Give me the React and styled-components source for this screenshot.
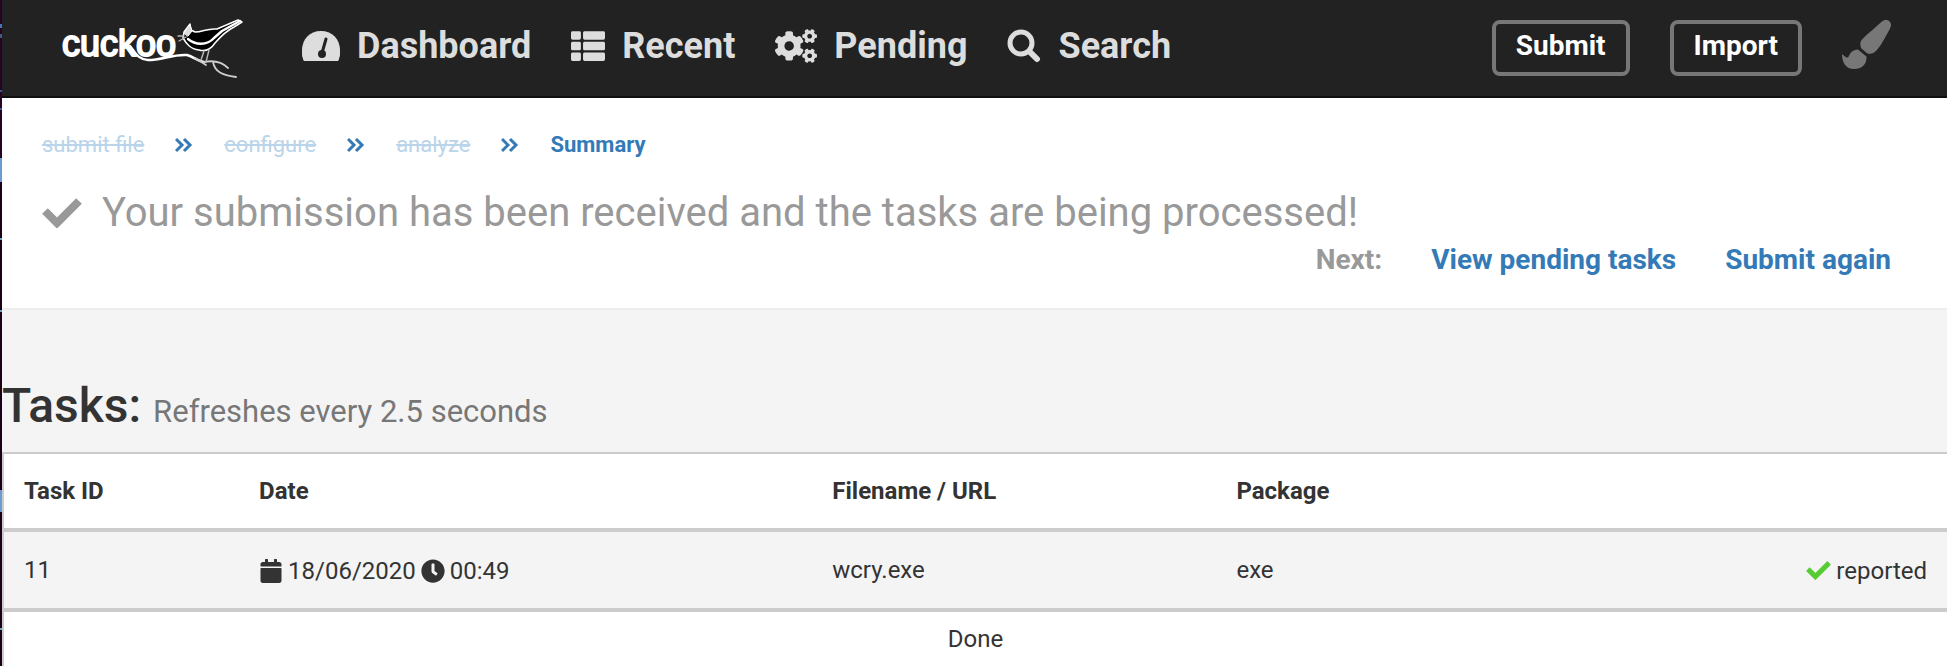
import React from "react";
import styled, { createGlobalStyle } from "styled-components";
import { FaThList, FaCogs, FaPaintBrush, FaCalendar, FaClock } from "react-icons/fa";

const GlobalStyle = createGlobalStyle`
  * { box-sizing: border-box; }
  body {
    margin: 0;
    background: #f4f4f4;
    color: #333;
    font: 400 24px/34px Roboto, "Liberation Sans", sans-serif;
  }
  html, body, #root { min-height: 100vh; }
  #root { display: flex; }
  a { text-decoration: none; }
`;

const Page = styled.div`
  display: flex;
  flex-direction: column;
  flex: 1;
  min-width: 0;
`;

const WindowEdge = styled.div`
  width: 2px;
  flex: none;
  background: linear-gradient(
    #240420 24px, #4872b4 24px 28px, #240420 28px 34px, #4a5584 34px 38px,
    #240420 38px 90px, #3a5ca0 90px 92px, #240420 92px 108px, #3a5ca0 108px 110px,
    #240420 110px 158px, #6b9bd0 158px 182px, #1c0018 182px 238px, #6fa3bd 238px 240px,
    #1c0018 240px 310px, #6fa3bd 310px 312px, #1c0018 312px 490px, #6b9bd0 490px 512px,
    #1c0018 512px 628px, #6fa3bd 628px 630px, #1c0018 630px
  );
`;

const Navbar = styled.nav`
  display: flex;
  align-items: center;
  justify-content: space-between;
  height: 98px;
  padding: 0 56px 0 58px;
  background: #222;
  border-bottom: 2px solid #101010;
`;

const NavGroup = styled.div`
  display: flex;
  align-items: center;
  gap: 40px;
`;

const Brand = styled.a`
  display: flex;
  margin-right: 18px;
  svg { display: block; }
`;

const NavLink = styled.a`
  display: flex;
  align-items: center;
  gap: 17px;
  padding-bottom: 4px;
  font-size: 36px;
  line-height: 48px;
  font-weight: 700;
  color: #ddd;
`;

const NavButton = styled.button`
  height: 56px;
  padding: 0 20px 4px;
  background: transparent;
  border: 4px solid #777;
  border-radius: 8px;
  color: #fff;
  font: 700 28px/36px Roboto, "Liberation Sans", sans-serif;
`;

const ThemeButton = styled.button`
  display: flex;
  padding: 0 0 8px;
  border: 0;
  background: transparent;
  color: #777;
`;

const Header = styled.header`
  padding: 29px 56px 27px 40px;
  background: #fff;
  border-bottom: 2px solid #eee;
`;

const Steps = styled.ol`
  display: flex;
  align-items: center;
  gap: 31px;
  margin: 0;
  padding: 0;
  list-style: none;
  font-size: 22px;
  line-height: 36px;
  color: #337ab7;
`;

const Step = styled.li`
  font-weight: ${(p) => (p.$current ? 700 : 400)};
  color: ${(p) => (p.$current ? "#337ab7" : "#bad4ea")};
  text-decoration: ${(p) => (p.$current ? "none" : "line-through")};
`;

const Divider = styled.li`
  display: flex;
`;

const Message = styled.h1`
  display: flex;
  align-items: center;
  gap: 20px;
  margin: 24px 0 0;
  font-size: 40px;
  line-height: 52px;
  font-weight: 400;
  color: #999;
`;

const Next = styled.div`
  display: flex;
  justify-content: flex-end;
  gap: 49px;
  font-size: 28px;
  line-height: 42px;
  font-weight: 700;
  color: #999;
  a { color: #337ab7; }
`;

const Heading = styled.h2`
  margin: 0;
  padding: 66px 0 10px;
  font-size: 48px;
  line-height: 60px;
  font-weight: 500;
  small {
    margin-left: 12px;
    font-size: 31px;
    font-weight: 400;
    color: #777;
  }
`;

const Tasks = styled.section`
  display: flex;
  flex-direction: column;
  flex: 1;
`;

const Panel = styled.div`
  flex: 1;
  background: #fff;
  border-top: 2px solid #ccc;
  border-left: 2px solid #ccc;
`;

const Table = styled.table`
  width: 100%;
  border-collapse: collapse;
  table-layout: fixed;
`;

const Cell = styled.td`
  height: ${(p) => (p.as ? 76 : 80)}px;
  width: ${(p) => p.$width || "auto"};
  padding: 0 20px;
  border-bottom: 4px solid #ccc;
  text-align: ${(p) => (p.$end ? "right" : "left")};
  font-weight: ${(p) => (p.as ? 700 : 400)};
  background: ${(p) => (p.as ? "#fff" : "#f4f4f4")};
`;

const Inline = styled.span`
  display: inline-flex;
  align-items: center;
  gap: 5px;
  vertical-align: middle;
`;

const Status = styled.p`
  margin: 0;
  padding: 10px 0 8px;
  text-align: center;
`;

const Logo = () => (
  <svg width="184" height="64" viewBox="60 16 184 64" fill="none" stroke="#fff" strokeLinecap="round" strokeLinejoin="round" role="img" aria-label="cuckoo">
    <text x="62" y="56" fontFamily="Liberation Sans, Arial, sans-serif" fontSize="36" fill="#fff" strokeWidth="2">cuckoo</text>
    <path d="M130 46C136 54 138 59 148 60C162 60 173 54 187 55C194 57 197 61 204 62" strokeWidth="2.5" />
    <path d="M195 58L206 65M204 62C214 60 222 62 228 68M213 62C215 72 222 75 236 77" strokeWidth="1.8" stroke="#ccc" />
    <path d="M183 38L184 32L187 28L190 24L191 30L195 32C203 32 207 28 217 29L238 20L242 22L234 27C226 31 221 36 215 43C211 49 206 52 199 50C190 49 186 43 183 38Z" fill="#000" strokeWidth="1.5" />
    <path d="M184 33L187 28L190 25L192 31L188 36Z" fill="#ddd" strokeWidth="1" />
    <path d="M188 39C195 45 207 46 214 38L222 31L240 21" strokeWidth="2.4" />
    <path d="M204 51L201 60M209 50L206 62M178 36L184 36M179 41L186 37" strokeWidth="1.4" stroke="#bbb" />
  </svg>
);

const GaugeIcon = () => (
  <svg width="38" height="30" viewBox="0 0 38 30" aria-hidden="true">
    <path fill="currentColor" d="M2 30C-4 14 4 0 19 0S42 14 36 30Z" />
    <path fill="currentColor" d="M2 30A19 19 0 1 1 36 30Z" />
    <path d="M24 8L20 22" stroke="#222" strokeWidth="3" strokeLinecap="round" />
    <circle cx="20" cy="23" r="4" fill="#222" />
  </svg>
);

const SearchIcon = () => (
  <svg width="34" height="34" viewBox="0 0 34 34" fill="none" stroke="currentColor" strokeLinecap="round" aria-hidden="true">
    <circle cx="14" cy="14" r="11" strokeWidth="5" />
    <path d="M23 23L30 30" strokeWidth="6" />
  </svg>
);

const CheckIcon = ({ width, color = "currentColor" }) => (
  <svg width={width} viewBox="0 0 40 30" fill="none" stroke={color} strokeWidth="8" aria-hidden="true">
    <path d="M3 13L15 25L37 3" />
  </svg>
);

const Chevrons = () => (
  <svg width="18" height="16" viewBox="0 0 18 16" fill="none" stroke="currentColor" strokeWidth="3" aria-hidden="true">
    <path d="M1 2L7 8L1 14M9 2L15 8L9 14" />
  </svg>
);

export default function App() {
  return (
    <>
      <GlobalStyle />
      <WindowEdge />
      <Page>
        <Navbar>
          <NavGroup>
            <Brand href="#"><Logo /></Brand>
            <NavLink href="#dashboard"><GaugeIcon />Dashboard</NavLink>
            <NavLink href="#recent"><FaThList size={34} />Recent</NavLink>
            <NavLink href="#pending"><FaCogs size={42} />Pending</NavLink>
            <NavLink href="#search"><SearchIcon />Search</NavLink>
          </NavGroup>
          <NavGroup>
            <NavButton type="button">Submit</NavButton>
            <NavButton type="button">Import</NavButton>
            <ThemeButton type="button" aria-label="Theme"><FaPaintBrush size={49} /></ThemeButton>
          </NavGroup>
        </Navbar>
        <Header>
          <Steps>
            <Step>submit file</Step>
            <Divider><Chevrons /></Divider>
            <Step>configure</Step>
            <Divider><Chevrons /></Divider>
            <Step>analyze</Step>
            <Divider><Chevrons /></Divider>
            <Step $current>Summary</Step>
          </Steps>
          <Message>
            <CheckIcon width={40} />
            Your submission has been received and the tasks are being processed!
          </Message>
          <Next>
            <span>Next:</span>
            <a href="#pending">View pending tasks</a>
            <a href="#submit">Submit again</a>
          </Next>
        </Header>
        <Tasks>
          <Heading>Tasks:<small>Refreshes every 2.5 seconds</small></Heading>
          <Panel>
            <Table>
              <thead>
                <tr>
                  <Cell as="th" $width="12.1%">Task ID</Cell>
                  <Cell as="th" $width="29.5%">Date</Cell>
                  <Cell as="th" $width="20.8%">Filename / URL</Cell>
                  <Cell as="th" $width="18%">Package</Cell>
                  <Cell as="th" />
                </tr>
              </thead>
              <tbody>
                <tr>
                  <Cell>11</Cell>
                  <Cell>
                    <Inline><FaCalendar size={24} />18/06/2020<FaClock size={24} />00:49</Inline>
                  </Cell>
                  <Cell>wcry.exe</Cell>
                  <Cell>exe</Cell>
                  <Cell $end><Inline><CheckIcon width={25} color="#5c3" />reported</Inline></Cell>
                </tr>
              </tbody>
            </Table>
            <Status>Done</Status>
          </Panel>
        </Tasks>
      </Page>
    </>
  );
}
